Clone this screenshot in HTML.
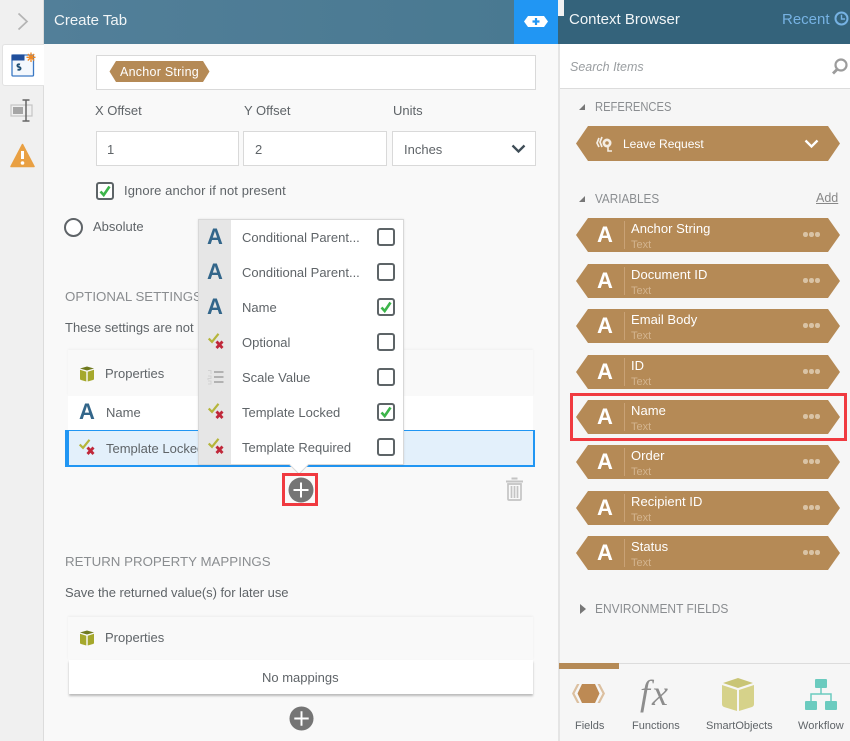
<!DOCTYPE html>
<html><head><meta charset="utf-8">
<style>
html,body{margin:0;padding:0;width:850px;height:741px;overflow:hidden;background:#f9f9f9}
body{position:relative;font-family:"Liberation Sans",sans-serif;color:#5f6468;font-size:13px}
.a{position:absolute}
.t{position:absolute;white-space:nowrap;line-height:16px}
.box{position:absolute;background:#fff;border:1px solid #d9d9d9;box-sizing:border-box}
.h{color:#8a8d90;font-size:13.3px}
.s{font-size:13px;transform-origin:0 50%}
.A{position:absolute;font-weight:bold;color:#33668a;font-size:22px;line-height:28px;width:32px;text-align:center}
.cb{position:absolute;left:377px;width:18px;height:18px;box-sizing:border-box;border:2px solid #5d6467;border-radius:3px;background:#fff}
.pill{position:absolute;left:576px;width:264px;height:34px}
.pill svg{position:absolute;left:0;top:0}
.pa{position:absolute;left:20px;top:3px;width:18px;text-align:center;color:#fff;font-weight:bold;font-size:22px;line-height:28px}
.ps{position:absolute;left:48px;top:3px;width:1px;height:28px;background:#c9a276}
.pn{position:absolute;left:55px;top:3px;color:#fff;font-size:13px;line-height:16px;letter-spacing:.05px;white-space:nowrap}
.pk{position:absolute;left:55px;top:21px;color:#d3b48f;font-size:11px;line-height:13px;white-space:nowrap}
.dots{position:absolute;left:227px;top:14px;width:17px;height:5px}
.dots i{position:absolute;top:0;width:4.5px;height:4.5px;border-radius:50%;background:#d9c3a5}
</style></head><body>
<svg width="0" height="0" style="position:absolute">
<symbol id="tx" viewBox="0 0 16 16"><path d="M.7 5.500L4 8.800 10.500 .8" fill="none" stroke="#b5b53c" stroke-width="2.200"/><path d="M8.500 8.500L14.500 15M14.500 8.500L8.500 15" stroke="#c0283a" stroke-width="2.800"/></symbol>
<symbol id="cube" viewBox="0 0 16 16"><path d="M8 .5L15 2.500 8 4.500 1 2.500z" fill="#6f7a1e"/><path d="M1 3.800L7.300 5.800V15.500L2 14C1.300 13.800 1 13.300 1 12.700z" fill="#a5a82c"/><path d="M15 3.800L8.700 5.800V15.500L14 14C14.700 13.800 15 13.300 15 12.700z" fill="#a5a82c"/></symbol>
<symbol id="chk" viewBox="0 0 14 14"><path d="M2.500 7.500L5.700 11 11.500 2.500" fill="none" stroke="#3cb54a" stroke-width="2.600"/></symbol>
<symbol id="plus" viewBox="0 0 26 26"><circle cx="13" cy="13" r="12.500" fill="#757575"/><path d="M13 5.500V20.500M5.500 13H20.500" stroke="#fff" stroke-width="2"/></symbol>
</svg>

<!-- Left rail -->
<div class="a" style="left:0;top:0;width:43px;height:741px;background:#f0f0f0;border-right:1px solid #dcdcdc"></div>
<svg class="a" style="left:17px;top:12px" width="12" height="19"><path d="M1.500 1.500L10 9.500 1.500 17.500" fill="none" stroke="#b4b4b4" stroke-width="1.700"/></svg>
<div class="a" style="left:2px;top:44px;width:42px;height:42px;background:#fff;border:1px solid #e2e2e2;border-right:none;border-radius:3px 0 0 3px;box-sizing:border-box"></div>
<svg class="a" style="left:11px;top:52px" width="25" height="26" viewBox="0 0 25 26">
<rect x="1" y="3" width="21.500" height="21" rx="1" fill="#f4f8fd" stroke="#3a78c4" stroke-width="1.300"/><rect x=".5" y="2.500" width="13" height="6" fill="#204f9c"/><path d="M9 12.500C6 11.500 5.500 14.500 8 15 10.500 15.500 10 18.500 6.500 17.500" fill="none" stroke="#204f74" stroke-width="1.900"/>
<g stroke="#f08a24" stroke-width="1.300"><path d="M20 .5V10M15.500 5.300H24.500M16.800 2L23.200 8.500M23.200 2L16.800 8.500"/></g></svg>
<svg class="a" style="left:10px;top:99px" width="24" height="23" viewBox="0 0 24 23"><rect x="1" y="6" width="21" height="11" fill="none" stroke="#c4c4c4" stroke-width="1.200"/><rect x="3" y="8" width="10" height="7" fill="#a6a6a6"/><path d="M16 1V22M12.500 1H19.500M12.500 22H19.500" stroke="#666" stroke-width="1.500" fill="none"/></svg>
<svg class="a" style="left:10px;top:143px" width="25" height="25" viewBox="0 0 25 25"><path d="M12.500 1.500L24 23.500H1z" fill="#e9a043" stroke="#e9a043" stroke-width="1.500" stroke-linejoin="round"/><path d="M12.500 8V16" stroke="#fff" stroke-width="3"/><circle cx="12.500" cy="20" r="1.800" fill="#fff"/></svg>

<!-- Header -->
<div class="a" style="left:44px;top:0;width:470px;height:44px;background:linear-gradient(90deg,#527f99,#497991)"></div>
<div class="t" style="left:54px;top:11px;color:#f1f5f7;font-size:15px;line-height:19px">Create Tab</div>
<div class="a" style="left:514px;top:0;width:44px;height:44px;background:#2196f3"></div>
<svg class="a" style="left:523px;top:15px" width="26" height="13" viewBox="0 0 26 13"><path d="M5 1H21L25 6.500 21 12H5L1 6.500z" fill="#fff"/><path d="M13 3V10M9.500 6.500H16.500" stroke="#2196f3" stroke-width="2.200"/></svg>
<div class="a" style="left:558px;top:0;width:292px;height:44px;background:#34637b"></div>
<div class="a" style="left:558px;top:0;width:6px;height:16px;background:#f2f2f2"></div>
<div class="t" style="left:569px;top:10px;color:#f1f5f7;font-size:15px;line-height:19px">Context Browser</div>
<div class="t" style="left:782px;top:10px;color:#76b2e3;font-size:15px;line-height:19px">Recent</div>
<svg class="a" style="left:834px;top:11px" width="16" height="16" viewBox="0 0 16 16"><circle cx="7.500" cy="7.500" r="6" fill="none" stroke="#76b2e3" stroke-width="2"/><path d="M7.500 3.800V8H11" fill="none" stroke="#76b2e3" stroke-width="1.400"/></svg>

<!-- Main form -->
<div class="box" style="left:96px;top:55px;width:440px;height:35px"></div>
<svg class="a" style="left:109px;top:61px" width="101" height="21"><path d="M7 0H94L100.500 10.500 94 21H7L.5 10.500z" fill="#b58a56"/></svg>
<div class="t" style="left:120px;top:64px;color:#fff;font-size:12.500px;letter-spacing:.25px">Anchor String</div>

<div class="t" style="left:95px;top:103px">X Offset</div>
<div class="t" style="left:244px;top:103px">Y Offset</div>
<div class="t" style="left:393px;top:103px">Units</div>
<div class="box" style="left:96px;top:131px;width:143px;height:35px"></div>
<div class="box" style="left:243px;top:131px;width:144px;height:35px"></div>
<div class="box" style="left:392px;top:131px;width:144px;height:35px"></div>
<div class="t" style="left:107px;top:142px">1</div>
<div class="t" style="left:255px;top:142px">2</div>
<div class="t" style="left:404px;top:142px">Inches</div>
<svg class="a" style="left:511px;top:144px" width="15" height="10"><path d="M1.500 1.500L7.500 7.500 13.500 1.500" fill="none" stroke="#3f4d57" stroke-width="2.300"/></svg>

<div class="a" style="left:96px;top:182px;width:18px;height:18px;box-sizing:border-box;border:2px solid #5d6467;border-radius:3px;background:#fff"></div>
<svg class="a" style="left:98px;top:184px" width="14" height="14"><use href="#chk"/></svg>
<div class="t" style="left:124px;top:183px;letter-spacing:.1px">Ignore anchor if not present</div>
<div class="a" style="left:64px;top:218px;width:19px;height:19px;box-sizing:border-box;border:2px solid #5f6468;border-radius:50%;background:#fff"></div>
<div class="t" style="left:93px;top:219px">Absolute</div>

<div class="t h" style="left:65px;top:289px">OPTIONAL SETTINGS</div>
<div class="t" style="left:65px;top:320px">These settings are not required</div>

<div class="a" style="left:68px;top:350px;width:465px;height:46px;background:#f9f9f9;box-shadow:0 -1px 2px rgba(0,0,0,.04)"></div>
<svg class="a" style="left:79px;top:366px" width="16" height="16"><use href="#cube"/></svg>
<div class="t" style="left:105px;top:366px">Properties</div>
<div class="a" style="left:68px;top:396px;width:465px;height:34px;background:#fff"></div>
<div class="A" style="left:71px;top:398px">A</div>
<div class="t" style="left:106px;top:405px">Name</div>
<div class="a" style="left:65px;top:430px;width:470px;height:37px;box-sizing:border-box;background:#e3f0fb;border:1px solid #2196f3;border-left:4px solid #2196f3;border-bottom:2px solid #2196f3;border-right:2px solid #2196f3"></div>
<svg class="a" style="left:79px;top:439px" width="16" height="16"><use href="#tx"/></svg>
<div class="t" style="left:106px;top:441px">Template Locked</div>

<!-- Dropdown -->
<div class="a" style="left:198px;top:219px;width:206px;height:246px;background:#fff;border:1px solid #d8d8d8;box-sizing:border-box;box-shadow:0 0 2px rgba(0,0,0,.1)"></div>
<div class="a" style="left:199px;top:220px;width:32px;height:244px;background:#e6e6e6"></div>
<svg class="a" style="left:289px;top:464px" width="22" height="11"><path d="M0 0L10 10 20 0" fill="#fff" stroke="#d8d8d8"/><path d="M1 0H19V-1H1z" fill="#fff"/></svg>
<div class="A" style="left:199px;top:223px">A</div>
<div class="A" style="left:199px;top:258px">A</div>
<div class="A" style="left:199px;top:293px">A</div>
<svg class="a" style="left:208px;top:333px" width="16" height="16"><use href="#tx"/></svg>
<svg class="a" style="left:207px;top:369px" width="17" height="16" viewBox="0 0 17 16"><path d="M7 3H16.500M7 8H16.500M7 13H16.500" stroke="#aaa" stroke-width="1.800"/><path d="M1 1.500H4V5M1 7H4V9.500H1V11M1 12H4V15H1" fill="none" stroke="#d2d2d2" stroke-width="1"/></svg>
<svg class="a" style="left:208px;top:403px" width="16" height="16"><use href="#tx"/></svg>
<svg class="a" style="left:208px;top:438px" width="16" height="16"><use href="#tx"/></svg>

<div class="t" style="left:242px;top:230px">Conditional Parent...</div>
<div class="t" style="left:242px;top:265px">Conditional Parent...</div>
<div class="t" style="left:242px;top:300px">Name</div>
<div class="t" style="left:242px;top:335px">Optional</div>
<div class="t" style="left:242px;top:370px">Scale Value</div>
<div class="t" style="left:242px;top:405px">Template Locked</div>
<div class="t" style="left:242px;top:440px">Template Required</div>
<div class="cb" style="top:228px"></div>
<div class="cb" style="top:263px"></div>
<div class="cb" style="top:298px"></div>
<svg class="a" style="left:379px;top:300px" width="14" height="14"><use href="#chk"/></svg>
<div class="cb" style="top:333px"></div>
<div class="cb" style="top:368px"></div>
<div class="cb" style="top:403px"></div>
<svg class="a" style="left:379px;top:405px" width="14" height="14"><use href="#chk"/></svg>
<div class="cb" style="top:438px"></div>

<!-- plus + trash -->
<svg class="a" style="left:288px;top:477px" width="26" height="26"><use href="#plus"/></svg>
<div class="a" style="left:282px;top:473px;width:36px;height:33px;box-sizing:border-box;border:3px solid #f03a40"></div>
<svg class="a" style="left:505px;top:477px" width="19" height="24" viewBox="0 0 19 24"><path d="M1 4.500H18M6.500 1.500H12.500" stroke="#c4c4c4" stroke-width="2"/><path d="M3 7H16V22C16 22.600 15.600 23 15 23H4C3.400 23 3 22.600 3 22zM6.500 9V21M9.500 9V21M12.500 9V21" fill="none" stroke="#c4c4c4" stroke-width="1.700"/></svg>

<!-- Return mappings -->
<div class="t h" style="left:65px;top:554px">RETURN PROPERTY MAPPINGS</div>
<div class="t" style="left:65px;top:585px;letter-spacing:-.05px">Save the returned value(s) for later use</div>
<div class="a" style="left:68px;top:617px;width:465px;height:43px;background:#f9f9f9;box-shadow:0 -1px 2px rgba(0,0,0,.05)"></div>
<svg class="a" style="left:79px;top:630px" width="16" height="16"><use href="#cube"/></svg>
<div class="t" style="left:105px;top:630px">Properties</div>
<div class="a" style="left:69px;top:660px;width:464px;height:34px;background:#fff;box-shadow:0 2px 2px rgba(0,0,0,.25)"></div>
<div class="t" style="left:262px;top:670px">No mappings</div>
<svg class="a" style="left:289px;top:706px" width="25" height="25"><use href="#plus"/></svg>

<!-- Right panel -->
<div class="a" style="left:558px;top:44px;width:292px;height:697px;background:#f6f6f6;border-left:2px solid #e5e5e5;box-sizing:border-box"></div>
<div class="a" style="left:560px;top:44px;width:290px;height:45px;background:#fff;border-bottom:1px solid #dcdcdc;box-sizing:border-box"></div>
<div class="t" style="left:570px;top:59px;font-style:italic;color:#9a9ea1;font-size:12.500px">Search Items</div>
<svg class="a" style="left:830px;top:58px" width="19" height="18" viewBox="0 0 19 18"><circle cx="11" cy="7" r="5.500" fill="none" stroke="#9c9c9c" stroke-width="2.200"/><path d="M7 11.500L3 15.500" stroke="#9c9c9c" stroke-width="2.800"/></svg>

<svg class="a" style="left:578px;top:103px" width="8" height="8"><path d="M7 1V7H1z" fill="#777"/></svg>
<div class="t h s" style="left:595px;top:99px;transform:scaleX(.86)">REFERENCES</div>
<svg class="pill" style="top:126px;height:35px" viewBox="0 0 264 35"><path d="M12 0H252L264 17.500 252 35H12L0 17.500z" fill="#b58a56"/></svg>
<svg class="a" style="left:596px;top:136px" width="17" height="16" viewBox="0 0 17 16"><path d="M3 2L1 7 3 11M6 1L4 6 6 11" fill="none" stroke="#f4ede3" stroke-width="1.700"/><circle cx="11" cy="7" r="4.500" fill="#f4ede3"/><path d="M12 10V15H16" fill="none" stroke="#f4ede3" stroke-width="1.600"/><circle cx="11" cy="7" r="1.800" fill="#b58a56"/></svg>
<div class="t" style="left:623px;top:136px;color:#fff;font-size:12px">Leave Request</div>
<svg class="a" style="left:804px;top:139px" width="15" height="10"><path d="M1.500 1.500L7.500 7.500 13.500 1.500" fill="none" stroke="#fff" stroke-width="2.300"/></svg>

<svg class="a" style="left:578px;top:195px" width="8" height="8"><path d="M7 1V7H1z" fill="#777"/></svg>
<div class="t h s" style="left:595px;top:191px;transform:scaleX(.9)">VARIABLES</div>
<div class="t" style="left:816px;top:190px;color:#888;text-decoration:underline;font-size:12.500px">Add</div>

<div class="pill" style="top:218px"><svg width="264" height="34"><path d="M12 0H252L264 17 252 34H12L0 17z" fill="#b58a56"/></svg><div class="pa">A</div><div class="ps"></div><div class="pn">Anchor String</div><div class="pk">Text</div><div class="dots"><i style="left:0"></i><i style="left:6px"></i><i style="left:12px"></i></div></div>
<div class="pill" style="top:264px"><svg width="264" height="34"><path d="M12 0H252L264 17 252 34H12L0 17z" fill="#b58a56"/></svg><div class="pa">A</div><div class="ps"></div><div class="pn">Document ID</div><div class="pk">Text</div><div class="dots"><i style="left:0"></i><i style="left:6px"></i><i style="left:12px"></i></div></div>
<div class="pill" style="top:309px"><svg width="264" height="34"><path d="M12 0H252L264 17 252 34H12L0 17z" fill="#b58a56"/></svg><div class="pa">A</div><div class="ps"></div><div class="pn">Email Body</div><div class="pk">Text</div><div class="dots"><i style="left:0"></i><i style="left:6px"></i><i style="left:12px"></i></div></div>
<div class="pill" style="top:355px"><svg width="264" height="34"><path d="M12 0H252L264 17 252 34H12L0 17z" fill="#b58a56"/></svg><div class="pa">A</div><div class="ps"></div><div class="pn">ID</div><div class="pk">Text</div><div class="dots"><i style="left:0"></i><i style="left:6px"></i><i style="left:12px"></i></div></div>
<div class="pill" style="top:400px"><svg width="264" height="34"><path d="M12 0H252L264 17 252 34H12L0 17z" fill="#b58a56"/></svg><div class="pa">A</div><div class="ps"></div><div class="pn">Name</div><div class="pk">Text</div><div class="dots"><i style="left:0"></i><i style="left:6px"></i><i style="left:12px"></i></div></div>
<div class="pill" style="top:445px"><svg width="264" height="34"><path d="M12 0H252L264 17 252 34H12L0 17z" fill="#b58a56"/></svg><div class="pa">A</div><div class="ps"></div><div class="pn">Order</div><div class="pk">Text</div><div class="dots"><i style="left:0"></i><i style="left:6px"></i><i style="left:12px"></i></div></div>
<div class="pill" style="top:491px"><svg width="264" height="34"><path d="M12 0H252L264 17 252 34H12L0 17z" fill="#b58a56"/></svg><div class="pa">A</div><div class="ps"></div><div class="pn">Recipient ID</div><div class="pk">Text</div><div class="dots"><i style="left:0"></i><i style="left:6px"></i><i style="left:12px"></i></div></div>
<div class="pill" style="top:536px"><svg width="264" height="34"><path d="M12 0H252L264 17 252 34H12L0 17z" fill="#b58a56"/></svg><div class="pa">A</div><div class="ps"></div><div class="pn">Status</div><div class="pk">Text</div><div class="dots"><i style="left:0"></i><i style="left:6px"></i><i style="left:12px"></i></div></div>

<div class="a" style="left:570px;top:393px;width:277px;height:48px;box-sizing:border-box;border:3px solid #f03a40"></div>

<svg class="a" style="left:579px;top:604px" width="8" height="10"><path d="M1 0L7 5 1 10z" fill="#777"/></svg>
<div class="t h s" style="left:595px;top:601px;transform:scaleX(.92)">ENVIRONMENT FIELDS</div>

<!-- Bottom tabs -->
<div class="a" style="left:560px;top:663px;width:290px;height:1px;background:#dcdcdc"></div>
<div class="a" style="left:559px;top:663px;width:60px;height:6px;background:#b58a56"></div>
<svg class="a" style="left:571px;top:683px" width="35" height="21" viewBox="0 0 35 21"><path d="M11 1H24L28.500 10.500 24 20H11L6.500 10.500z" fill="#bd8a54"/><path d="M6 1L1 10.500 6 20H8.500L3.500 10.500 8.500 1zM29 1L34 10.500 29 20H26.500L31.500 10.500 26.500 1z" fill="#dcc0a0"/></svg>
<div class="t" style="left:640px;top:675px;font-family:'Liberation Serif',serif;font-style:italic;font-size:36px;line-height:36px;color:#8d8d8d;letter-spacing:2px">fx</div>
<svg class="a" style="left:722px;top:678px" width="32" height="33" viewBox="0 0 32 33"><path d="M16 0L31 5 16 10 1 5z" fill="#c9c576"/><path d="M0 7L15 12V33L2 29C.700 28.500 0 27.500 0 26z" fill="#d6d28a"/><path d="M32 7L17 12V33L30 29C31.300 28.500 32 27.500 32 26z" fill="#d6d28a"/></svg>
<svg class="a" style="left:805px;top:679px" width="32" height="32" viewBox="0 0 32 32"><rect x="10" y="0" width="12" height="9" rx="1" fill="#6bcbbf"/><rect x="0" y="22" width="12" height="9" rx="1" fill="#6bcbbf"/><rect x="20" y="22" width="12" height="9" rx="1" fill="#6bcbbf"/><path d="M16 9V15M6 22V15H26V22" fill="none" stroke="#6bcbbf" stroke-width="1.500"/></svg>
<div class="t" style="left:575px;top:718px;font-size:11px">Fields</div>
<div class="t" style="left:632px;top:718px;font-size:11px">Functions</div>
<div class="t" style="left:706px;top:718px;font-size:11px">SmartObjects</div>
<div class="t" style="left:798px;top:718px;font-size:11px;letter-spacing:.1px">Workflow</div>
</body></html>
